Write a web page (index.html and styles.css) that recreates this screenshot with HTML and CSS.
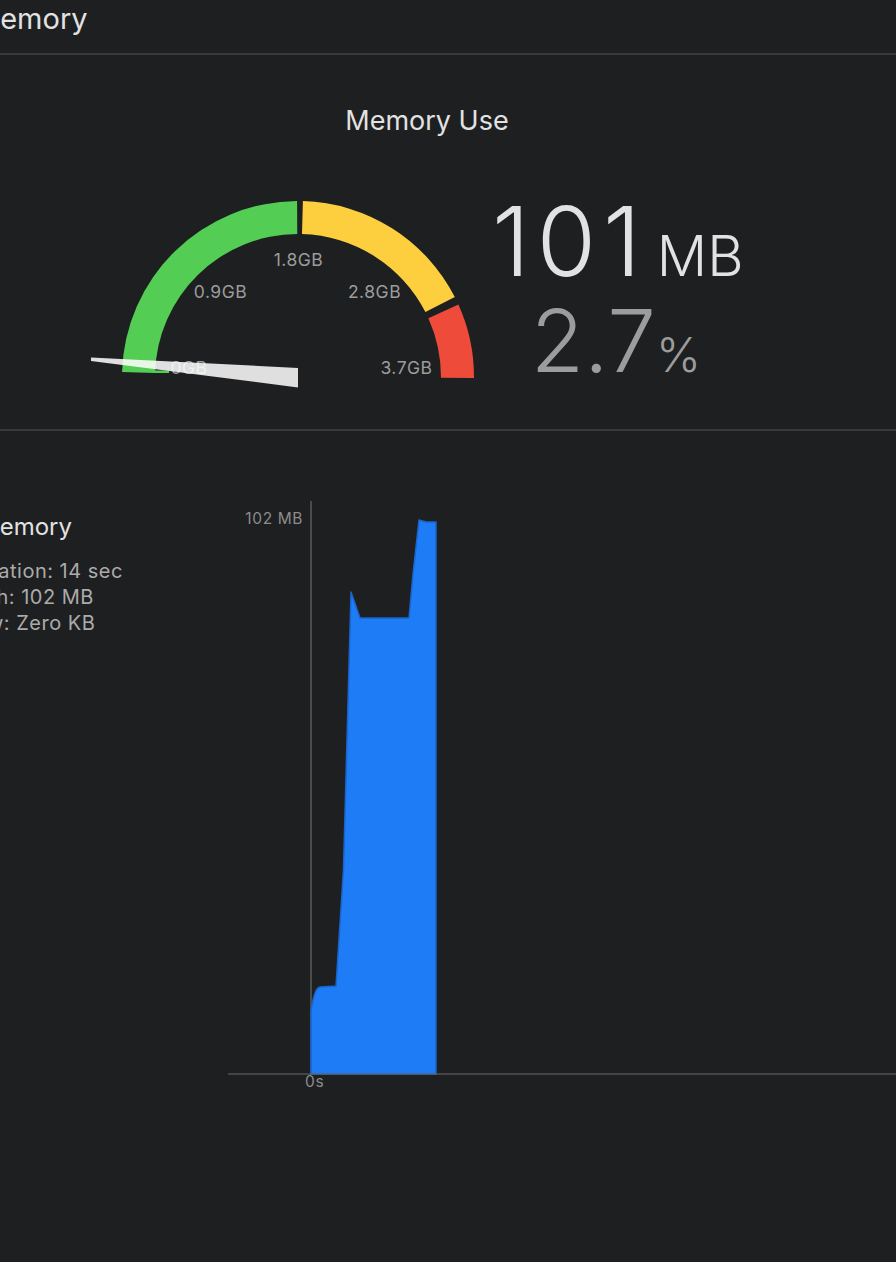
FILE: index.html
```html
<!DOCTYPE html>
<html>
<head>
<meta charset="utf-8">
<link rel="stylesheet" href="styles.css">
</head>
<body>
<div class="page">
  <header class="top-bar">
    <h1 class="top-title">Memory</h1>
  </header>

  <section class="use-panel">
    <h2 class="use-title">Memory Use</h2>
    <div class="use-row">
      <svg class="gauge" width="400" height="210" viewBox="80 190 400 210">
        <path class="seg-green" d="M 122.07 373.09 A 176 176 0 0 1 297.08 202.0 L 297.25 235.0 A 143 143 0 0 0 155.06 374.01 Z"/>
        <rect class="seg-green" x="154" y="371.5" width="15" height="2.5"/>
        <path class="seg-yellow" d="M 302.91 202.07 A 176 176 0 0 1 454.82 298.10 L 425.41 313.08 A 143 143 0 0 0 301.99 235.06 Z"/>
        <path class="seg-red" d="M 458.41 305.57 A 176 176 0 0 1 474.0 378.92 L 441.0 378.75 A 143 143 0 0 0 428.33 319.15 Z"/>
        <text class="g-label" x="298.5" y="267">1.8GB</text>
        <text class="g-label" x="220.5" y="299">0.9GB</text>
        <text class="g-label" x="374.5" y="299">2.8GB</text>
        <text class="g-label" x="406.5" y="375">3.7GB</text>
        <text class="g-label" x="189" y="375">0GB</text>
        <polygon class="needle" points="91,358.5 91,362 298,388.5 298,369"/>
      </svg>
      <div class="readout">
        <div class="readout-main"><span class="big-num">101</span><span class="big-unit">MB</span></div>
        <div class="readout-sub"><span class="pct-num">2.7</span><span class="pct-unit">%</span></div>
      </div>
    </div>
  </section>

  <section class="timeline-panel">
    <div class="stats">
      <h3 class="stats-title">Memory</h3>
      <p class="stat-line">Duration: 14 sec</p>
      <p class="stat-line">High: 102 MB</p>
      <p class="stat-line">Low: Zero KB</p>
    </div>
    <svg class="chart" width="668" height="610" viewBox="228 495 668 610">
      <line class="axis" x1="311" y1="502" x2="311" y2="1075"/>
      <path class="area" d="M 311 1012 C 313 1000, 315 989, 320 988 L 336 987 L 343.5 870 L 351 593 L 360 619 L 409 619 L 413 575 L 419 521 L 426 523 L 436 523 L 436 1075 L 311 1075 Z"/>
      <line class="axis" x1="228" y1="1075" x2="896" y2="1075"/>
      <text class="c-label c-label-y" x="303" y="525">102 MB</text>
      <text class="c-label" x="305" y="1088">0s</text>
    </svg>
  </section>
</div>
</body>
</html>
```

FILE: styles.css
```css
html, body {
  margin: 0;
  padding: 0;
  background: #1e1f21;
  overflow: hidden;
}

body {
  width: 896px;
  height: 1262px;
  font-family: Inter, "Noto Sans", "Liberation Sans", sans-serif;
  color: #e2e2e2;
}

.page {
  width: 896px;
}

.top-bar {
  height: 53px;
  border-bottom: 2px solid #38393b;
  box-sizing: content-box;
}

.top-title {
  margin: 0 0 0 -26px;
  padding-top: 2px;
  font-size: 29px;
  line-height: 34px;
  font-weight: 400;
  color: #e2e2e2;
}

.use-panel {
  height: 374px;
  border-bottom: 2px solid #38393b;
  display: flex;
  flex-direction: column;
}

.use-title {
  margin: 0;
  padding-top: 51px;
  width: 854px;
  text-align: center;
  font-size: 27px;
  line-height: 30px;
  font-weight: 400;
  color: #e2e2e2;
}

.use-row {
  display: flex;
  align-items: flex-start;
  margin-top: 53px;
  padding-left: 80px;
}

.gauge {
  display: block;
  flex: none;
}

.seg-green { fill: #54cd54; }
.seg-yellow { fill: #fdcf3e; }
.seg-red { fill: #ee4b3b; }

.g-label {
  font-family: Inter, "Noto Sans", "Liberation Sans", sans-serif;
  font-size: 17.5px;
  letter-spacing: 0.5px;
  fill: #9c9c9c;
  text-anchor: middle;
}

.needle {
  fill: rgba(255, 255, 255, 0.86);
}

.readout {
  margin-left: 12px;
  margin-top: 6px;
  display: flex;
  flex-direction: column;
  align-items: center;
}

.readout-main {
  color: #e2e2e2;
  line-height: 92px;
  height: 92px;
  white-space: nowrap;
}

.big-num {
  font-size: 96px;
  font-weight: 300;
  letter-spacing: 7px;
}

.big-unit {
  font-size: 56px;
  font-weight: 300;
  margin-left: 9px;
}

.readout-sub {
  color: #9c9c9c;
  line-height: 1;
  white-space: nowrap;
  margin-top: 10px;
  margin-left: -4px;
}

.pct-num {
  font-size: 87px;
  font-weight: 300;
}

.pct-unit {
  font-size: 48px;
  font-weight: 300;
  margin-left: 0;
}

.timeline-panel {
  display: flex;
  align-items: flex-start;
}

.stats {
  width: 228px;
  flex: none;
  padding-top: 81px;
}

.stats-title {
  margin: 0 0 16px -22px;
  font-size: 24px;
  line-height: 30px;
  font-weight: 400;
  color: #e2e2e2;
}

.stat-line {
  margin: 0 0 0 -37px;
  font-size: 20px;
  letter-spacing: 0.5px;
  line-height: 26px;
  color: #ababab;
  white-space: nowrap;
}

.chart {
  display: block;
  flex: none;
  margin-top: 63px;
}

.axis {
  stroke: #6a6a6a;
  stroke-width: 1.2;
}

.area {
  fill: #1f7cf7;
  stroke: #1a64cc;
  stroke-width: 1.5;
  stroke-linejoin: round;
}

.c-label {
  font-family: Inter, "Noto Sans", "Liberation Sans", sans-serif;
  font-size: 15.5px;
  letter-spacing: 0.6px;
  fill: #8c8c8c;
}

.c-label-y {
  text-anchor: end;
}
```
